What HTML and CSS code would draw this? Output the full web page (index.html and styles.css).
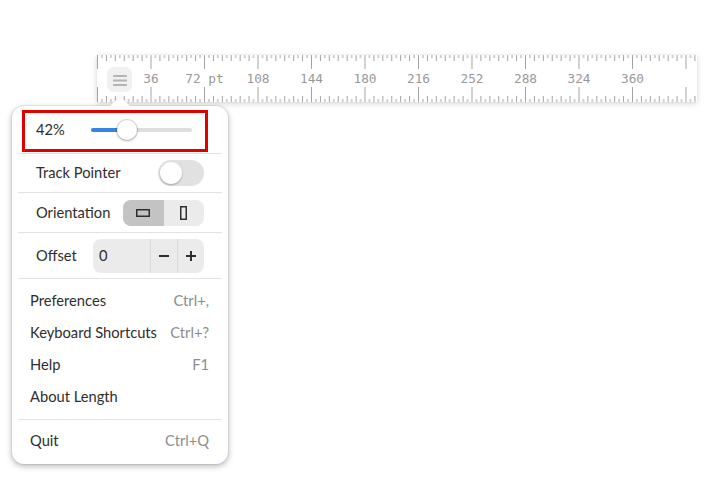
FILE: index.html
```html
<!DOCTYPE html>
<html lang="en">
<head>
<meta charset="utf-8">
<title>Length</title>
<link rel="stylesheet" href="styles.css">
</head>
<body>
<div class="page">
  <div class="ruler">
    <svg class="ticks ticks-top" width="600" height="14" viewBox="0 0 600 14">
      <defs>
        <pattern id="pt" patternUnits="userSpaceOnUse" width="53.5" height="14">
          <g stroke="#a3a3a3" stroke-width="1">
            <line x1="0.5" y1="0" x2="0.5" y2="14"/>
            <line x1="4.96" y1="0" x2="4.96" y2="3"/>
            <line x1="9.42" y1="0" x2="9.42" y2="6"/>
            <line x1="13.88" y1="0" x2="13.88" y2="3"/>
            <line x1="18.33" y1="0" x2="18.33" y2="6"/>
            <line x1="22.79" y1="0" x2="22.79" y2="3"/>
            <line x1="27.25" y1="0" x2="27.25" y2="6"/>
            <line x1="31.71" y1="0" x2="31.71" y2="3"/>
            <line x1="36.17" y1="0" x2="36.17" y2="6"/>
            <line x1="40.63" y1="0" x2="40.63" y2="3"/>
            <line x1="45.08" y1="0" x2="45.08" y2="6"/>
            <line x1="49.54" y1="0" x2="49.54" y2="3"/>
          </g>
        </pattern>
      </defs>
      <rect x="0" y="0" width="600" height="14" fill="url(#pt)"/>
    </svg>
    <div class="ruler-labels">
      <span>36</span><span>72 pt</span><span>108</span><span>144</span><span>180</span><span>216</span><span>252</span><span>288</span><span>324</span><span>360</span>
    </div>
    <button class="menu-btn" aria-label="Main menu">
      <svg width="14" height="12" viewBox="0 0 14 12"><g fill="#b4b4b4"><rect x="0" y="1" width="14" height="2" rx="0.5"/><rect x="0" y="5.5" width="14" height="2" rx="0.5"/><rect x="0" y="10" width="14" height="2" rx="0.5"/></g></svg>
    </button>
    <svg class="ticks ticks-bottom" width="600" height="15" viewBox="0 0 600 15">
      <defs>
        <pattern id="pb" patternUnits="userSpaceOnUse" width="53.5" height="15">
          <g stroke="#a3a3a3" stroke-width="1">
            <line x1="0.5" y1="15" x2="0.5" y2="0"/>
            <line x1="4.96" y1="15" x2="4.96" y2="12"/>
            <line x1="9.42" y1="15" x2="9.42" y2="9"/>
            <line x1="13.88" y1="15" x2="13.88" y2="12"/>
            <line x1="18.33" y1="15" x2="18.33" y2="9"/>
            <line x1="22.79" y1="15" x2="22.79" y2="12"/>
            <line x1="27.25" y1="15" x2="27.25" y2="9"/>
            <line x1="31.71" y1="15" x2="31.71" y2="12"/>
            <line x1="36.17" y1="15" x2="36.17" y2="9"/>
            <line x1="40.63" y1="15" x2="40.63" y2="12"/>
            <line x1="45.08" y1="15" x2="45.08" y2="9"/>
            <line x1="49.54" y1="15" x2="49.54" y2="12"/>
          </g>
        </pattern>
      </defs>
      <rect x="0" y="0" width="600" height="15" fill="url(#pb)"/>
    </svg>
  </div>

  <div class="popover">
    <div class="arrow"></div>
    <div class="row row-zoom">
      <span class="zoom-label">42%</span>
      <div class="slider">
        <div class="slider-fill"></div>
        <div class="slider-knob"></div>
      </div>
    </div>
    <div class="highlight"></div>
    <div class="sep"></div>
    <div class="row row-track">
      <span class="lbl">Track Pointer</span>
      <div class="switch"><div class="switch-knob"></div></div>
    </div>
    <div class="sep"></div>
    <div class="row row-orient">
      <span class="lbl">Orientation</span>
      <div class="toggle-group">
        <div class="toggle active">
          <svg width="14" height="8" viewBox="0 0 14 8"><rect x="0.75" y="0.75" width="12.5" height="6.5" fill="none" stroke="#2e2e2e" stroke-width="1.5"/></svg>
        </div>
        <div class="toggle">
          <svg width="7" height="14" viewBox="0 0 7 14"><rect x="0.75" y="0.75" width="5.5" height="12.5" fill="none" stroke="#2e2e2e" stroke-width="1.5"/></svg>
        </div>
      </div>
    </div>
    <div class="sep"></div>
    <div class="row row-offset">
      <span class="lbl">Offset</span>
      <div class="spin">
        <span class="spin-value">0</span>
        <div class="spin-btn">
          <svg width="12" height="12" viewBox="0 0 12 12"><rect x="1" y="5" width="10" height="2" fill="#2e2e2e"/></svg>
        </div>
        <div class="spin-btn">
          <svg width="12" height="12" viewBox="0 0 12 12"><rect x="1" y="5" width="10" height="2" fill="#2e2e2e"/><rect x="5" y="1" width="2" height="10" fill="#2e2e2e"/></svg>
        </div>
      </div>
    </div>
    <div class="sep"></div>
    <div class="menu">
      <div class="item"><span>Preferences</span><span class="accel">Ctrl+,</span></div>
      <div class="item"><span>Keyboard Shortcuts</span><span class="accel">Ctrl+?</span></div>
      <div class="item"><span>Help</span><span class="accel">F1</span></div>
      <div class="item"><span>About Length</span><span class="accel"></span></div>
    </div>
    <div class="sep"></div>
    <div class="menu menu-last">
      <div class="item"><span>Quit</span><span class="accel">Ctrl+Q</span></div>
    </div>
  </div>
</div>
</body>
</html>
```

FILE: styles.css
```css
* { box-sizing: border-box; }

html, body {
  margin: 0;
  padding: 0;
  background: #ffffff;
}

body {
  font-family: "Lato", "Noto Sans", sans-serif;
  font-size: 14.7px;
  color: #2e2e2e;
  width: 722px;
  height: 477px;
  overflow: hidden;
}

.page {
  position: relative;
  width: 722px;
  height: 477px;
  padding-top: 55px;
  padding-left: 97px;
}

/* Ruler */
.ruler {
  width: 600px;
  height: 47px;
  background: #ffffff;
  box-shadow: 0 2px 6px rgba(0, 0, 0, 0.15), 0 0 2px rgba(0, 0, 0, 0.06);
  display: grid;
  grid-template-columns: 600px;
  grid-template-rows: 14px 18px 15px;
}

.ticks { display: block; }
.ticks-top { grid-row: 1; grid-column: 1; }
.ticks-bottom { grid-row: 3; grid-column: 1; }

.ruler-labels {
  grid-row: 2;
  grid-column: 1;
  display: flex;
  align-items: center;
  padding-left: 27.25px;
  font-family: "DejaVu Sans Mono", monospace;
  font-size: 12.8px;
  color: #999999;
}

.ruler-labels span {
  width: 53.5px;
  flex: none;
  text-align: center;
  white-space: pre;
}

.menu-btn {
  grid-row: 1 / 4;
  grid-column: 1;
  align-self: center;
  justify-self: start;
  margin: 0 0 0 10px;
  width: 25px;
  height: 25px;
  border: none;
  border-radius: 7px;
  background: #f0f0f0;
  padding: 0;
  display: flex;
  align-items: center;
  justify-content: center;
  position: relative;
  top: 1px;
}

.menu-btn svg { display: block; }

/* Popover */
.popover {
  position: absolute;
  left: 12px;
  top: 106px;
  width: 216px;
  height: 358px;
  background: #ffffff;
  border-radius: 12px;
  box-shadow: 0 2px 6px rgba(0, 0, 0, 0.3), 0 0 0 1px rgba(0, 0, 0, 0.06);
  padding: 0 6px 7px;
  display: flex;
  flex-direction: column;
}

.arrow {
  position: absolute;
  left: 98px;
  top: -10px;
  width: 0;
  height: 0;
  border-left: 10px solid transparent;
  border-right: 10px solid transparent;
  border-bottom: 10px solid #ffffff;
  filter: drop-shadow(0 -1px 1px rgba(0, 0, 0, 0.08));
}

.sep {
  height: 1px;
  background: #e2e2e2;
  flex: none;
}

.row {
  display: flex;
  align-items: center;
  justify-content: space-between;
  padding: 0 18px 0 18px;
  flex: none;
}

.lbl, .zoom-label, .item span, .spin-value {
  padding-bottom: 2px;
}

.row-zoom { height: 47px; justify-content: flex-start; }
.row-track { height: 38px; }
.row-orient { height: 39px; }
.row-offset { height: 45px; }

.zoom-label {
  width: 55px;
  flex: none;
}

.slider {
  position: relative;
  width: 101px;
  height: 4px;
  border-radius: 2px;
  background: #dedede;
}

.slider-fill {
  width: 36px;
  height: 4px;
  border-radius: 2px;
  background: #3584e4;
}

.slider-knob {
  position: absolute;
  left: 26px;
  top: -8px;
  width: 20px;
  height: 20px;
  border-radius: 50%;
  background: #ffffff;
  box-shadow: 0 0 0 1px rgba(0, 0, 0, 0.12), 0 1px 3px rgba(0, 0, 0, 0.25);
}

.highlight {
  position: absolute;
  left: 10px;
  top: 4px;
  width: 186px;
  height: 42px;
  border: 3px solid #e00000;
  pointer-events: none;
}

.switch {
  width: 46px;
  height: 26px;
  border-radius: 13px;
  background: #e1e1e1;
  padding: 2px;
  display: flex;
  align-items: center;
}

.switch-knob {
  width: 22px;
  height: 22px;
  border-radius: 50%;
  background: #ffffff;
  box-shadow: 0 1px 2px rgba(0, 0, 0, 0.3);
}

.toggle-group {
  display: flex;
  width: 81px;
  height: 26px;
  border-radius: 8px;
  overflow: hidden;
  background: #ebebeb;
}

.toggle {
  flex: 1;
  display: flex;
  align-items: center;
  justify-content: center;
}

.toggle svg { display: block; }

.toggle.active { background: #c3c3c3; }

.spin {
  display: flex;
  width: 111px;
  height: 34px;
  border-radius: 8px;
  background: #ebebeb;
  align-items: stretch;
}

.spin-value {
  flex: 1;
  display: flex;
  align-items: center;
  padding-left: 6px;
}

.spin-btn {
  width: 27px;
  flex: none;
  display: flex;
  align-items: center;
  justify-content: center;
  border-left: 1px solid #d9d9d9;
}

.spin-btn svg { display: block; }

.menu {
  display: flex;
  flex-direction: column;
  padding: 6px 0 6px;
  flex: none;
}

.menu-last { padding: 5px 0 0; }

.item {
  height: 32px;
  display: flex;
  align-items: center;
  justify-content: space-between;
  padding: 0 13px 0 12px;
}

.accel {
  color: #8c8c8c;
}
```
